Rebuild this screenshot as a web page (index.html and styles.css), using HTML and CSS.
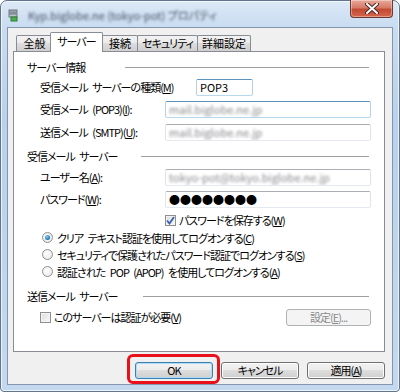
FILE: index.html
```html
<!DOCTYPE html>
<html lang="ja">
<head>
    <meta charset="UTF-8">
    <title>プロパティ</title>
    <link rel="stylesheet" href="styles.css">
</head>
<body>
    <div class="window">
        <div class="titlebar">
            <span class="app-icon">
                <svg width="11" height="13" viewBox="0 0 11 13">
                    <rect x="1" y="1" width="8" height="3" fill="#9aa3ad" stroke="#6f7780" stroke-width="1"/>
                    <rect x="1" y="5" width="8" height="3" fill="#b9c1c9" stroke="#6f7780" stroke-width="1"/>
                    <rect x="3" y="8" width="6" height="4" fill="#4caf50" stroke="#2e7d32" stroke-width="1"/>
                </svg>
            </span>
            <span class="title">Kyp.biglobe.ne (tokyo-pot) プロパティ</span>
            <div class="close">
                <svg width="14" height="11" viewBox="0 0 14 11">
                    <path d="M2 1 L12 10 M12 1 L2 10" stroke="#4a2a24" stroke-width="4" stroke-linecap="round"/>
                    <path d="M2 1 L12 10 M12 1 L2 10" stroke="#fff" stroke-width="2" stroke-linecap="round"/>
                </svg>
            </div>
        </div>

        <div class="client">
            <div class="tabs">
                <div class="tab t-general">全般</div>
                <div class="tab active t-server">サーバー</div>
                <div class="tab t-connect">接続</div>
                <div class="tab t-security">セキュリティ</div>
                <div class="tab t-advanced">詳細設定</div>
            </div>

            <div class="panel">
                <div class="group-head">
                    <span>サーバー情報</span>
                    <i class="rule rule-a"></i>
                </div>
                <div class="row">
                    <label class="wide">受信メール サーバーの種類(<u>M</u>)</label>
                    <div class="field short hl">POP3</div>
                </div>
                <div class="row">
                    <label>受信メール (POP3)(<u>I</u>):</label>
                    <div class="field hl"><span class="blur">mail.biglobe.ne.jp</span></div>
                </div>
                <div class="row row-gap">
                    <label>送信メール (SMTP)(<u>U</u>):</label>
                    <div class="field"><span class="blur">mail.biglobe.ne.jp</span></div>
                </div>

                <div class="group-head head-2">
                    <span>受信メール サーバー</span>
                    <i class="rule rule-b"></i>
                </div>
                <div class="row row-user">
                    <label>ユーザー名(<u>A</u>):</label>
                    <div class="field"><span class="blur">tokyo-pot@tokyo.biglobe.ne.jp</span></div>
                </div>
                <div class="row">
                    <label>パスワード(<u>W</u>):</label>
                    <div class="field"><span class="dots">●●●●●●●●</span></div>
                </div>
                <div class="check-row save-pw">
                    <span class="checkbox checked">
                        <svg width="9" height="9" viewBox="0 0 9 9">
                            <path d="M1 4.5 L3.5 7.5 L8 1" fill="none" stroke="#3b5fb0" stroke-width="1.8"/>
                        </svg>
                    </span>
                    <span>パスワードを保存する(<u>W</u>)</span>
                </div>
                <div class="radio-row">
                    <span class="radio on"></span>
                    <span>クリア テキスト認証を使用してログオンする(<u>C</u>)</span>
                </div>
                <div class="radio-row">
                    <span class="radio"></span>
                    <span>セキュリティで保護されたパスワード認証でログオンする(<u>S</u>)</span>
                </div>
                <div class="radio-row">
                    <span class="radio"></span>
                    <span>認証された POP (APOP) を使用してログオンする(<u>A</u>)</span>
                </div>

                <div class="group-head head-3">
                    <span>送信メール サーバー</span>
                    <i class="rule rule-c"></i>
                </div>
                <div class="row row-last">
                    <span class="checkbox"></span>
                    <span>このサーバーは認証が必要(<u>V</u>)</span>
                    <div class="btn disabled settings">設定(<u>E</u>)...</div>
                </div>
            </div>

            <div class="footer">
                <div class="btn default ok">OK</div>
                <div class="btn">キャンセル</div>
                <div class="btn">適用(<u>A</u>)</div>
            </div>
        </div>
    </div>
</body>
</html>
```

FILE: styles.css
```css
* {
    box-sizing: border-box;
}
html, body {
    margin: 0;
    height: 100%;
}
body {
    font-family: "Noto Sans CJK JP", "Noto Sans", sans-serif;
    font-size: 11px;
    font-feature-settings: "palt";
    letter-spacing: -1px;
    word-spacing: 3px;
    color: #000;
    background: #fff;
}
u {
    text-decoration: underline;
    text-underline-offset: 1px;
}

/* window frame */
.window {
    width: 400px;
    height: 392px;
    display: flex;
    flex-direction: column;
    background: linear-gradient(#dce8f6, #c9dcf1 26px, #b9d1ec 120px, #c4d9ef);
    border: 1px solid #60748e;
    border-radius: 7px 7px 4px 4px;
    padding: 0 6px 6px 6px;
    box-shadow: inset 0 0 0 1px rgba(255, 255, 255, 0.7);
}
.titlebar {
    height: 26px;
    display: flex;
    align-items: center;
}
.app-icon {
    display: flex;
    margin: 2px 9px 0 1px;
}
.title {
    display: inline-block;
    font-size: 11px;
    letter-spacing: 0;
    word-spacing: 0;
    color: rgba(40, 50, 70, 0.2);
    text-shadow: 0 0 2px rgba(40, 50, 70, 0.7);
    filter: blur(1px);
    margin-top: 2px;
}
.close {
    align-self: flex-start;
    margin: -1px 0 0 auto;
    width: 43px;
    height: 18px;
    border: 1px solid #6b3a31;
    border-top: none;
    border-radius: 0 0 4px 4px;
    background: linear-gradient(#e9a99a, #d77a68 45%, #c24a32 55%, #d7674c);
    box-shadow: inset 0 0 0 1px rgba(255, 255, 255, 0.35);
    display: flex;
    align-items: center;
    justify-content: center;
}

/* client area */
.client {
    flex: 1;
    background: #f0f0f0;
    border: 1px solid #8496ae;
    padding: 5px 7px 5px 5px;
    display: flex;
    flex-direction: column;
}
.tabs {
    height: 18px;
    display: flex;
    align-items: flex-end;
    padding-left: 3px;
}
.tab {
    height: 16px;
    margin-right: -1px;
    line-height: 15px;
    text-align: center;
    border: 1px solid #898c95;
    border-bottom: none;
    border-radius: 2px 2px 0 0;
    background: linear-gradient(#f2f2f2, #ebebeb 50%, #dddddd 50%, #cfcfcf);
}
.t-general { width: 37px; letter-spacing: 0; }
.t-server { width: 53px; }
.t-connect { width: 36px; letter-spacing: 0; }
.t-security { width: 61px; }
.t-advanced { width: 54px; letter-spacing: 0; }
.tab.active {
    height: 20px;
    margin: 0 -1px -1px -2px;
    line-height: 17px;
    background: #fff;
    position: relative;
    z-index: 1;
}
.tab.active + .tab {
    margin-left: 0;
}

.panel {
    height: 301px;
    background: #fff;
    border: 1px solid #898c95;
    padding: 7px 13px 0 13px;
}
.group-head {
    height: 16px;
    display: flex;
    align-items: center;
}
.rule {
    margin-left: auto;
    margin-right: 2px;
    height: 1px;
    background: #a0a0a0;
}
.rule-a { width: 244px; }
.rule-b { width: 228px; }
.rule-c { width: 226px; }
.head-2 { margin-top: 5px; }
.head-3 { margin-top: 8px; }

.row {
    height: 22px;
    display: flex;
    align-items: center;
    padding-left: 13px;
}
.row:nth-child(2) { margin-top: 1px; }
.row-gap { margin-top: 1px; }
.row-user { margin-top: 2px; }
.row-last { margin-top: 2px; }
.row label {
    width: 125px;
    flex-shrink: 0;
}
.row label.wide {
    width: 156px;
}

.field {
    flex: 1;
    height: 17px;
    border: 1px solid #abadb3;
    border-color: #abadb3 #e2e3ea #e3e9ef #e2e3ea;
    border-radius: 2px;
    padding-left: 3px;
    line-height: 15px;
    letter-spacing: 0;
    word-spacing: 0;
    overflow: hidden;
    white-space: nowrap;
}
.field.hl {
    border-color: #5c93bc #b5cfe7 #b7d9ed #b5cfe7;
}
.field.short {
    flex: none;
    width: 57px;
}
.blur {
    display: inline-block;
    color: rgba(80, 80, 90, 0.15);
    text-shadow: 0 0 2px rgba(80, 80, 90, 0.6);
    filter: blur(1px);
}
.dots {
    font-size: 11px;
    line-height: 15px;
}

.check-row {
    height: 18px;
    display: flex;
    align-items: center;
    padding-left: 138px;
    margin-top: 1px;
}
.checkbox {
    width: 11px;
    height: 11px;
    border: 1px solid #8e8f8f;
    background: linear-gradient(135deg, #dcdcdc, #f8f8f8);
    box-shadow: inset 0 0 0 1px #f4f4f4;
    margin-right: 3px;
    display: flex;
    align-items: center;
    justify-content: center;
    flex-shrink: 0;
}

.radio-row {
    height: 17px;
    display: flex;
    align-items: center;
    padding-left: 15px;
    white-space: nowrap;
}
.radio {
    width: 11px;
    height: 11px;
    border: 1px solid #8e8f8f;
    border-radius: 50%;
    background: radial-gradient(circle at 40% 40%, #fff, #e4e4e4);
    margin-right: 4px;
    flex-shrink: 0;
    position: relative;
}
.radio.on::after {
    content: "";
    position: absolute;
    left: 2px;
    top: 2px;
    width: 5px;
    height: 5px;
    border-radius: 50%;
    background: radial-gradient(circle at 40% 35%, #8ad0f5, #1c6fb0 70%, #124f8a);
}

/* buttons */
.btn {
    height: 17px;
    width: 78px;
    border: 1px solid #707070;
    border-radius: 3px;
    background: linear-gradient(#f2f2f2, #ebebeb 50%, #dddddd 50%, #cfcfcf);
    box-shadow: inset 0 0 0 1px #fcfcfc;
    text-align: center;
    line-height: 15px;
}
.btn.disabled {
    color: #8a8a8a;
    border-color: #adb2b5;
    background: #f4f4f4;
    box-shadow: none;
}
.settings {
    margin-left: auto;
    width: 85px;
}
.footer {
    margin-top: 10px;
    display: flex;
    justify-content: flex-end;
    gap: 8px;
}
.btn.default {
    border-color: #3c7fb1;
    box-shadow: inset 0 0 0 1px #aedcf4;
}
.ok {
    position: relative;
}
.ok::after {
    content: "";
    position: absolute;
    left: -9px;
    top: -9px;
    right: -8px;
    bottom: -6px;
    border: 3px solid #e8111b;
    border-radius: 6px;
}
```
